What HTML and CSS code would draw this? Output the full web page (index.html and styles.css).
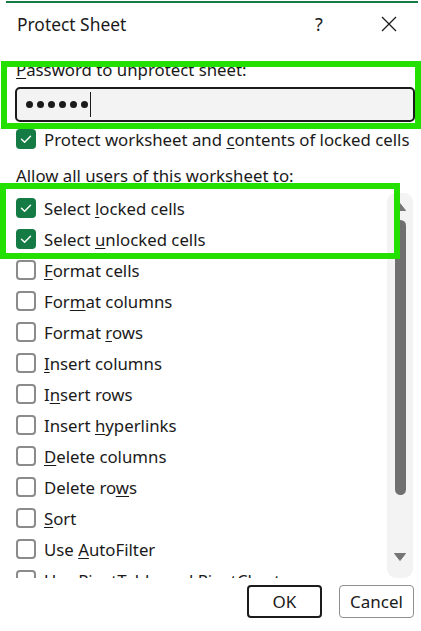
FILE: index.html
```html
<!DOCTYPE html>
<html lang="en">
<head>
<meta charset="utf-8">
<title>Protect Sheet</title>
<link rel="stylesheet" href="styles.css">
</head>
<body>
<div class="dialog">
  <div class="accent"></div>
  <header class="titlebar">
    <span class="title">Protect Sheet</span>
    <span class="help">?</span>
    <span class="close">
      <svg width="16" height="16" viewBox="0 0 16 16"><path d="M1 1 L15 15 M15 1 L1 15" stroke="#1a1a1a" stroke-width="1.3" fill="none"/></svg>
    </span>
  </header>
  <main class="body">
    <div class="field-label"><u>P</u>assword to unprotect sheet:</div>
    <div class="pw-input">
      <span class="dot"></span><span class="dot"></span><span class="dot"></span><span class="dot"></span><span class="dot"></span><span class="dot"></span>
      <span class="caret"></span>
    </div>
    <div class="row protect">
      <span class="cb checked"><svg width="20" height="20" viewBox="0 0 20 20"><path d="M5.5 10.2 L8.6 13.2 L14.5 7.2" stroke="#fff" stroke-width="1.5" fill="none" stroke-linecap="round" stroke-linejoin="round"/></svg></span>
      <span class="txt">Protect worksheet and <u>c</u>ontents of locked cells</span>
    </div>
    <div class="allow-label">Allow all users of this worksheet to:</div>
    <div class="list-wrap">
      <div class="list">
        <div class="row item"><span class="cb checked"><svg width="20" height="20" viewBox="0 0 20 20"><path d="M5.5 10.2 L8.6 13.2 L14.5 7.2" stroke="#fff" stroke-width="1.5" fill="none" stroke-linecap="round" stroke-linejoin="round"/></svg></span><span class="txt">Select <u>l</u>ocked cells</span></div>
        <div class="row item"><span class="cb checked"><svg width="20" height="20" viewBox="0 0 20 20"><path d="M5.5 10.2 L8.6 13.2 L14.5 7.2" stroke="#fff" stroke-width="1.5" fill="none" stroke-linecap="round" stroke-linejoin="round"/></svg></span><span class="txt">Select <u>u</u>nlocked cells</span></div>
        <div class="row item"><span class="cb"></span><span class="txt"><u>F</u>ormat cells</span></div>
        <div class="row item"><span class="cb"></span><span class="txt">For<u>m</u>at columns</span></div>
        <div class="row item"><span class="cb"></span><span class="txt">Format <u>r</u>ows</span></div>
        <div class="row item"><span class="cb"></span><span class="txt"><u>I</u>nsert columns</span></div>
        <div class="row item"><span class="cb"></span><span class="txt">I<u>n</u>sert rows</span></div>
        <div class="row item"><span class="cb"></span><span class="txt">Insert <u>h</u>yperlinks</span></div>
        <div class="row item"><span class="cb"></span><span class="txt"><u>D</u>elete columns</span></div>
        <div class="row item"><span class="cb"></span><span class="txt">Delete ro<u>w</u>s</span></div>
        <div class="row item"><span class="cb"></span><span class="txt"><u>S</u>ort</span></div>
        <div class="row item"><span class="cb"></span><span class="txt">Use <u>A</u>utoFilter</span></div>
        <div class="row item"><span class="cb"></span><span class="txt">Use PivotTable and PivotChart</span></div>
      </div>
      <div class="scrollbar">
        <svg class="arrow up" width="12" height="8" viewBox="0 0 12 8"><path d="M6 0.5 L11.5 7.5 L0.5 7.5 Z" fill="#757575" stroke="#757575" stroke-linejoin="round"/></svg>
        <div class="thumb"></div>
        <div class="spacer"></div>
        <svg class="arrow down" width="12" height="8" viewBox="0 0 12 8"><path d="M0.5 0.5 L11.5 0.5 L6 7.5 Z" fill="#757575" stroke="#757575" stroke-linejoin="round"/></svg>
      </div>
    </div>
  </main>
  <footer class="buttons">
    <button class="btn primary">OK</button>
    <button class="btn">Cancel</button>
  </footer>
  <div class="hl hl-password"></div>
  <div class="hl hl-select"></div>
</div>
</body>
</html>
```
FILE: styles.css
```css
* { box-sizing: border-box; }
html, body { margin: 0; padding: 0; background: #fff; }
body {
  font-family: "Noto Sans", "Open Sans", sans-serif;
  color: #1a1a1a;
  font-size: 16.8px;
}
.dialog {
  position: relative;
  width: 421px;
  height: 631px;
  background: #fff;
  overflow: hidden;
}
.accent {
  height: 2px;
  margin: 1px 3px 0 6px;
  background: #157a43;
}
.titlebar {
  height: 41px;
  display: flex;
  align-items: center;
  padding-left: 17px;
}
.title { font-size: 17.4px; flex: 1; }
.help { font-size: 18px; width: 8px; margin-right: 58px; }
.close { width: 16px; height: 16px; margin-right: 24px; display: flex; }
.body {
  padding: 0 6px 0 15px;
}
.field-label {
  margin-top: 16px;
  margin-left: 1px;
  height: 20px;
  line-height: 20px;
}
u { text-decoration-thickness: 1px; text-underline-offset: 2px; }
.pw-input {
  margin-top: 7px;
  height: 35px;
  border: 2px solid #1b1b1b;
  border-radius: 5px;
  background: #f3f3f3;
  display: flex;
  align-items: center;
  padding-left: 9px;
  gap: 4px;
}
.dot {
  width: 7px;
  height: 7px;
  border-radius: 50%;
  background: #1b1b1b;
}
.caret {
  width: 1px;
  height: 25px;
  background: #1b1b1b;
  margin-left: -2px;
}
.row {
  display: flex;
  align-items: center;
  margin-left: 1px;
}
.protect { margin-top: 8px; height: 20px; }
.cb {
  flex: none;
  width: 20px;
  height: 20px;
  border: 2px solid #8b8b8b;
  border-radius: 4px;
  margin-right: 8px;
  display: flex;
  margin-top: -2px;
}
.cb.checked {
  border: none;
  background: #137b43;
}
.txt { white-space: nowrap; line-height: 20px; }
.allow-label {
  margin-top: 16px;
  margin-left: 1px;
  height: 20px;
  line-height: 20px;
}
.list-wrap {
  margin-top: 7px;
  height: 385px;
  display: flex;
  margin-right: 2px;
}
.list {
  flex: 1;
  overflow: hidden;
}
.item { height: 31px; }
.scrollbar {
  width: 26px;
  background: #f3f3f3;
  border-radius: 9px;
  display: flex;
  flex-direction: column;
  align-items: center;
  padding-top: 10px;
  padding-bottom: 17px;
}
.thumb {
  margin-top: 9px;
  width: 11px;
  height: 275px;
  border-radius: 6px;
  background: #707070;
}
.spacer { flex: 1; }
.buttons {
  display: flex;
  justify-content: flex-end;
  gap: 17px;
  margin-top: 7px;
  padding-right: 7px;
}
.btn {
  font-family: inherit;
  font-size: 17px;
  color: #1a1a1a;
  width: 75px;
  height: 33px;
  background: #fff;
  border: 1px solid #8e8e8e;
  border-radius: 4px;
  padding: 0;
}
.btn.primary { border: 2px solid #1b1b1b; }
.hl {
  position: absolute;
  border: 6px solid #24e000;
  pointer-events: none;
}
.hl-password { left: 1px; top: 61px; width: 420px; height: 68px; }
.hl-select { left: 0; top: 183px; width: 400px; height: 76px; }
```
